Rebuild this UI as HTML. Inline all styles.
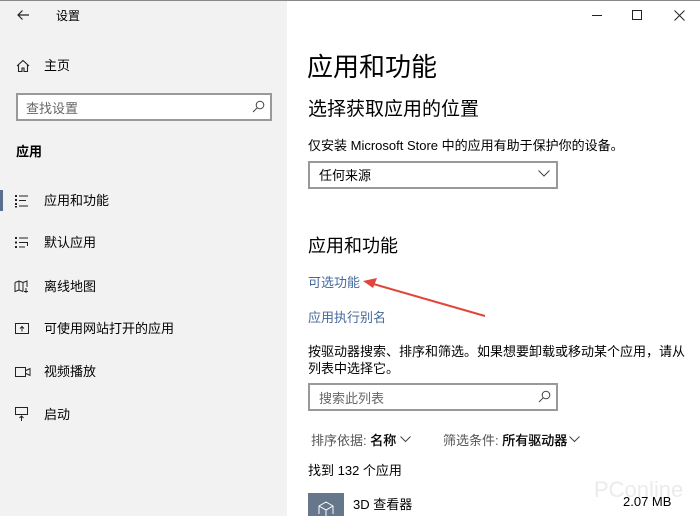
<!DOCTYPE html>
<html><head><meta charset="utf-8"><style>
*{margin:0;padding:0;box-sizing:border-box}
body{width:700px;height:516px;overflow:hidden;background:#fff;font-family:"Liberation Sans","Noto Sans CJK SC",sans-serif;color:#000;position:relative}
.a{position:absolute;white-space:nowrap}
#side{position:absolute;left:0;top:0;width:287px;height:516px;background:#f2f2f2}
.nav{font-size:13px;line-height:16px}
.ic{position:absolute}
.box{position:absolute;border:2px solid #999;background:#fff}
.lnk{color:#44699c;font-size:13px}
</style></head><body>
<div id="side"></div>
<div class="a" style="left:0;top:0;width:700px;height:1px;background:#888"></div>
<svg class="ic" style="left:16px;top:9px" width="14" height="12" viewBox="0 0 14 12"><path d="M13 6H2M6.5 1.5L2 6l4.5 4.5" stroke="#222" stroke-width="1.2" fill="none"/></svg>
<div class="a" style="left:56px;top:7px;font-size:12px">设置</div>
<div class="a" style="left:592px;top:15px;width:10px;height:1px;background:#222"></div>
<div class="a" style="left:632px;top:10px;width:10px;height:10px;border:1px solid #222"></div>
<svg class="ic" style="left:674px;top:10px" width="11" height="11"><path d="M0.5 0.5l10 10M10.5 0.5l-10 10" stroke="#222" stroke-width="1"/></svg>
<svg class="ic" style="left:16px;top:59px" width="14" height="14" viewBox="0 0 14 14"><path d="M1 7L7 1.5 13 7M2.5 6v6.5h3.5V9h2v3.5h3.5V6" stroke="#222" stroke-width="1.1" fill="none"/></svg>
<div class="a nav" style="left:44px;top:58px">主页</div>
<div class="box" style="left:16px;top:93px;width:256px;height:28px"></div>
<div class="a" style="left:26px;top:98px;font-size:13px;color:#666">查找设置</div>
<svg class="ic" style="left:252px;top:100px" width="13" height="13"><circle cx="8" cy="5" r="3.8" stroke="#444" fill="none"/><path d="M5.3 7.7L1 12" stroke="#444"/></svg>
<div class="a" style="left:16px;top:141px;font-size:13px;font-weight:bold">应用</div>
<div class="a" style="left:0;top:190px;width:3px;height:21px;background:#5a6f8e"></div>
<svg class="ic" style="left:15px;top:194px" width="14" height="14"><g fill="#222"><rect x="0" y="1" width="2" height="2"/><rect x="0" y="5" width="2" height="2"/><rect x="0" y="9" width="2" height="2"/><rect x="0" y="12" width="2" height="1.5"/><rect x="4" y="1.5" width="9" height="1"/><rect x="4" y="6" width="7" height="1"/><rect x="4" y="11.5" width="9" height="1"/></g></svg>
<div class="a nav" style="left:44px;top:193px">应用和功能</div>
<svg class="ic" style="left:15px;top:237px" width="14" height="12"><g fill="#222"><rect x="0" y="0" width="2" height="2"/><rect x="0" y="4.5" width="2" height="2"/><rect x="0" y="9" width="2" height="2"/><rect x="4" y="0.5" width="9" height="1"/><rect x="4" y="5" width="9" height="1"/><rect x="4" y="9.5" width="6" height="1"/><rect x="12" y="5" width="1" height="4"/></g></svg>
<div class="a nav" style="left:44px;top:235px">默认应用</div>
<svg class="ic" style="left:14px;top:280px" width="16" height="14"><path d="M1 2.5l4-1.5 4 1.5 4-1.5v6M1 2.5v9l4-1.5 4 1.5M5 1v9M9 2.5v9M12 8v5M10 11.5h4" stroke="#222" fill="none"/></svg>
<div class="a nav" style="left:44px;top:279px">离线地图</div>
<svg class="ic" style="left:15px;top:323px" width="14" height="11"><rect x="0.5" y="0.5" width="13" height="10" stroke="#222" fill="none"/><path d="M7 8.5V3.5M5 5.5L7 3.5 9 5.5" stroke="#222" fill="none"/></svg>
<div class="a nav" style="left:44px;top:321px">可使用网站打开的应用</div>
<svg class="ic" style="left:15px;top:367px" width="16" height="10"><rect x="0.5" y="0.5" width="10" height="9" stroke="#222" fill="none"/><path d="M11 3.5l4-2v7l-4-2" stroke="#222" fill="none"/></svg>
<div class="a nav" style="left:44px;top:364px">视频播放</div>
<svg class="ic" style="left:15px;top:407px" width="13" height="15"><rect x="0.5" y="0.5" width="12" height="7" stroke="#222" fill="none"/><path d="M6.5 14V9M4.5 11L6.5 9 8.5 11" stroke="#222" fill="none"/></svg>
<div class="a nav" style="left:44px;top:407px">启动</div>

<div class="a" style="left:307px;top:47px;font-size:26px">应用和功能</div>
<div class="a" style="left:308px;top:94px;font-size:19px">选择获取应用的位置</div>
<div class="a" style="left:308px;top:135px;font-size:13px">仅安装 Microsoft Store 中的应用有助于保护你的设备。</div>
<div class="box" style="left:308px;top:161px;width:250px;height:28px"></div>
<div class="a" style="left:319px;top:165px;font-size:13px">任何来源</div>
<svg class="ic" style="left:538px;top:170px" width="12" height="7"><path d="M0.5 0.5l5.5 5.5 5.5-5.5" stroke="#444" fill="none"/></svg>
<div class="a" style="left:308px;top:232px;font-size:18px">应用和功能</div>
<div class="a lnk" style="left:308px;top:272px">可选功能</div>
<div class="a lnk" style="left:308px;top:307px">应用执行别名</div>
<svg class="ic" style="left:360px;top:275px" width="130" height="45"><path d="M10 8L125 41" stroke="#e0463c" stroke-width="2" fill="none"/><path d="M3 6L17 3 13 13Z" fill="#e0463c"/></svg>
<div class="a" style="left:308px;top:343px;font-size:13px;line-height:17px">按驱动器搜索、排序和筛选。如果想要卸载或移动某个应用，请从<br>列表中选择它。</div>
<div class="box" style="left:308px;top:383px;width:250px;height:28px"></div>
<div class="a" style="left:319px;top:388px;font-size:13px;color:#666">搜索此列表</div>
<svg class="ic" style="left:538px;top:390px" width="13" height="13"><circle cx="8" cy="5" r="3.8" stroke="#444" fill="none"/><path d="M5.3 7.7L1 12" stroke="#444"/></svg>
<div class="a" style="left:311px;top:430px;font-size:13px;color:#555">排序依据: <b style="color:#000;font-weight:normal;-webkit-text-stroke:0.3px #000">名称</b></div>
<svg class="ic" style="left:400px;top:436px" width="11" height="7"><path d="M0.5 0.5l5 5 5-5" stroke="#444" fill="none"/></svg>
<div class="a" style="left:443px;top:430px;font-size:13px;color:#555">筛选条件: <b style="color:#000;font-weight:normal;-webkit-text-stroke:0.3px #000">所有驱动器</b></div>
<svg class="ic" style="left:569px;top:436px" width="11" height="7"><path d="M0.5 0.5l5 5 5-5" stroke="#444" fill="none"/></svg>
<div class="a" style="left:308px;top:460px;font-size:13px">找到 132 个应用</div>
<div class="a" style="left:308px;top:493px;width:36px;height:23px;background:#66768b"></div>
<svg class="ic" style="left:317px;top:501px" width="18" height="15"><path d="M9 1l7 4v8M9 1L2 5v8M2 5l7 4 7-4M9 9v6" stroke="#fff" fill="none"/></svg>
<div class="a" style="left:353px;top:494px;font-size:13px">3D 查看器</div>
<div class="a" style="left:623px;top:494px;font-size:13px">2.07 MB</div>
<div class="a" style="left:594px;top:477px;font-size:22px;color:#ebebeb">PConline</div>
</body></html>
